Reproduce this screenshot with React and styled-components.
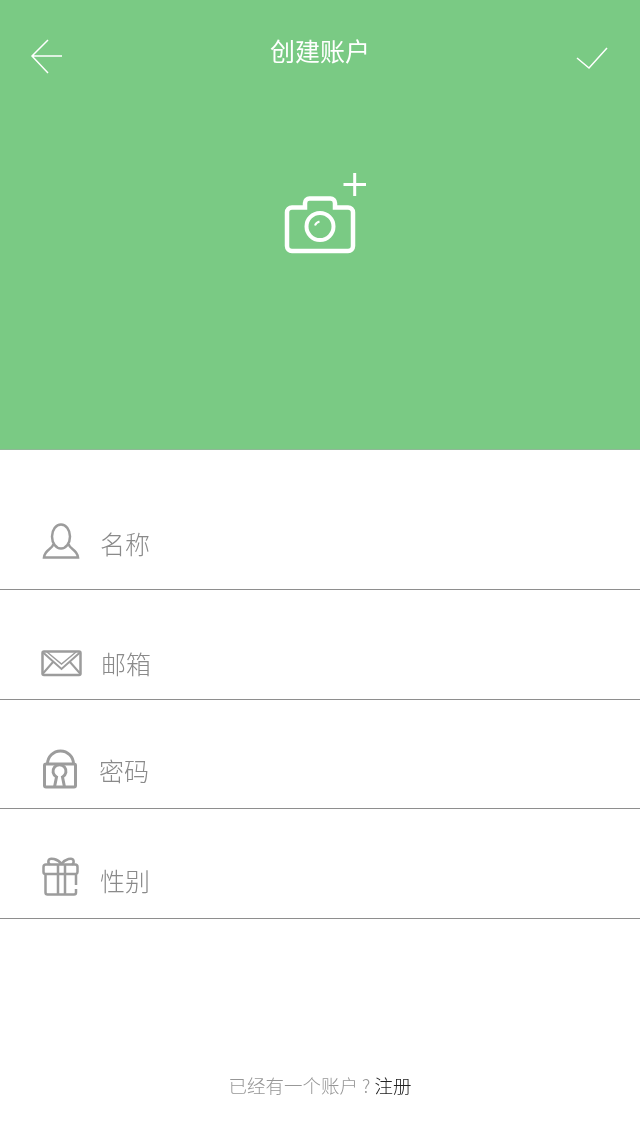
import React from 'react';
import styled, { createGlobalStyle } from 'styled-components';

const GlobalStyle = createGlobalStyle`
  html, body {
    margin: 0;
    padding: 0;
    background: #fff;
  }
  body {
    font-family: 'Noto Sans CJK SC', 'Noto Sans', sans-serif;
  }
`;

const Page = styled.div`
  width: 640px;
  min-height: 1136px;
  background: #fff;
  display: flex;
  flex-direction: column;
`;

const Hero = styled.header`
  height: 450px;
  box-sizing: border-box;
  background: #7aca84;
  border-bottom: 1px solid #8fb896;
  display: flex;
  flex-direction: column;
  align-items: center;
`;

const TopBar = styled.div`
  width: 100%;
  height: 112px;
  box-sizing: border-box;
  padding: 38px 30px 0;
  display: flex;
  justify-content: space-between;
  align-items: flex-start;
`;

const Title = styled.h1`
  margin: 0;
  font-size: 25px;
  font-weight: 400;
  line-height: 24px;
  color: #fff;
  will-change: transform;
`;

const BarIcon = styled.svg`
  display: block;
  width: 36px;
  height: 36px;
  fill: none;
  stroke: #fff;
  stroke-width: 1.5;
`;

const CameraIcon = styled.svg`
  display: block;
  width: 100px;
  height: 100px;
  margin-top: 53px;
  fill: none;
  stroke: #fff;
`;

const Field = styled.div`
  height: ${p => p.$height}px;
  box-sizing: border-box;
  padding: 0 0 ${p => p.$pad}px 40px;
  border-bottom: 1px solid #8e8e8e;
  display: flex;
  align-items: flex-end;
`;

const FieldIcon = styled.svg`
  display: block;
  flex: none;
  width: 44px;
  height: 52px;
  fill: none;
  stroke: #9c9c9c;
  stroke-width: 2.5;
`;

const Label = styled.span`
  margin-left: ${p => p.$gap}px;
  height: 52px;
  font-size: 25px;
  font-weight: 300;
  line-height: 50px;
  color: #8a8a8a;
  will-change: transform;
`;

const Footer = styled.footer`
  margin-top: 151px;
  text-align: center;
  font-size: 18.5px;
  font-weight: 300;
  line-height: 30px;
  color: #969696;
  will-change: transform;
`;

const SignUp = styled.span`
  color: #222;
`;

function App() {
  return (
    <Page>
      <GlobalStyle />
      <Hero>
        <TopBar>
          <BarIcon viewBox="0 0 36 36">
            <path d="M18 2 L2 18 L18 35 M2 18 H32" />
          </BarIcon>
          <Title>创建账户</Title>
          <BarIcon viewBox="0 0 36 36">
            <path d="M3 20 L15 30 L33 10" />
          </BarIcon>
        </TopBar>
        <CameraIcon viewBox="0 0 100 100">
          <path
            strokeWidth="4.5"
            d="M22 42.5 H35 V38 a4.5 4.5 0 0 1 4.5 -4.5 H60.5 a4.5 4.5 0 0 1 4.5 4.5 V42.5 H78 a5 5 0 0 1 5 5 V81 a5 5 0 0 1 -5 5 H22 a5 5 0 0 1 -5 -5 V47.5 a5 5 0 0 1 5 -5 Z"
          />
          <circle cx="50" cy="61.5" r="13.5" strokeWidth="4" />
          <path strokeWidth="2" d="M45 60.5 Q46 57.5 49.5 56.5" />
          <path strokeWidth="3" d="M73.5 19.5 H96 M84.7 8 V31" />
        </CameraIcon>
      </Hero>

      <Field $height={140} $pad={19}>
        <FieldIcon viewBox="0 0 44 52">
          <ellipse cx="21" cy="18.5" rx="9" ry="12" />
          <path d="M13.5 26 C12 32 5 31 4 39.5 H38 C37 31 30 32 28.5 26" />
        </FieldIcon>
        <Label $gap={16}>名称</Label>
      </Field>

      <Field $height={110} $pad={9}>
        <FieldIcon viewBox="0 0 44 52" strokeWidth="3">
          <rect x="2.5" y="13.5" width="38" height="23.5" rx="1.5" />
          <path d="M2.5 14 L21.5 31 L40.5 14 M2.5 36 L13 24 M40.5 36 L30 24" strokeWidth="2" />
          <path d="M7 14 L21.5 26 L36 14" strokeWidth="1.4" />
        </FieldIcon>
        <Label $gap={17}>邮箱</Label>
      </Field>

      <Field $height={109} $pad={11}>
        <FieldIcon viewBox="0 0 44 52">
          <rect x="4.5" y="19" width="31" height="23" rx="1.5" strokeWidth="3" />
          <path d="M7.5 19 a13 13 0 0 1 26 0" strokeWidth="3" />
          <path d="M14.5 42 L16.5 32 a6.5 6.5 0 1 1 6 0 L24.5 42" strokeWidth="3" />
        </FieldIcon>
        <Label $gap={15}>密码</Label>
      </Field>

      <Field $height={110} $pad={11}>
        <FieldIcon viewBox="0 0 44 52" strokeWidth="3">
          <path d="M5.5 19 V37.5 a2 2 0 0 0 2 2 H34 a2 2 0 0 0 2 -2 V34" />
          <path d="M36 30 V19 H5.5 a2 2 0 0 1 -2 -2 V12 a2.5 2.5 0 0 1 2.5 -2.5 H35 a2.5 2.5 0 0 1 2.5 2.5 V17 a2 2 0 0 1 -1.5 2" />
          <path d="M18 9.5 V39.5 M25 9.5 V39.5" />
          <path d="M21.5 9 C18 4 9.5 2 8.5 5.5 C8 7.5 9 9 10 9.5 M21.5 9 C25 4 32.5 2 33.5 5.5 C34 7.5 33 9 32 9.5" strokeWidth="2.5" />
        </FieldIcon>
        <Label $gap={16}>性别</Label>
      </Field>

      <Footer>
        已经有一个账户 ? <SignUp>注册</SignUp>
      </Footer>
    </Page>
  );
}

export default App;
